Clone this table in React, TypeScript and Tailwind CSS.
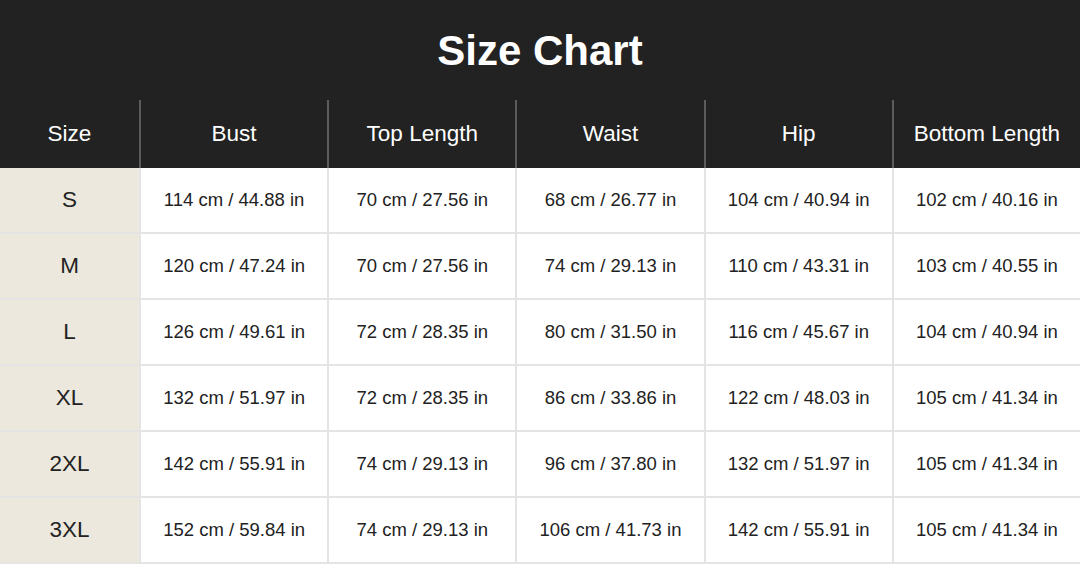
const HEADERS = ['Size', 'Bust', 'Top Length', 'Waist', 'Hip', 'Bottom Length']

const ROWS: string[][] = [
  ['S', '114 cm / 44.88 in', '70 cm / 27.56 in', '68 cm / 26.77 in', '104 cm / 40.94 in', '102 cm / 40.16 in'],
  ['M', '120 cm / 47.24 in', '70 cm / 27.56 in', '74 cm / 29.13 in', '110 cm / 43.31 in', '103 cm / 40.55 in'],
  ['L', '126 cm / 49.61 in', '72 cm / 28.35 in', '80 cm / 31.50 in', '116 cm / 45.67 in', '104 cm / 40.94 in'],
  ['XL', '132 cm / 51.97 in', '72 cm / 28.35 in', '86 cm / 33.86 in', '122 cm / 48.03 in', '105 cm / 41.34 in'],
  ['2XL', '142 cm / 55.91 in', '74 cm / 29.13 in', '96 cm / 37.80 in', '132 cm / 51.97 in', '105 cm / 41.34 in'],
  ['3XL', '152 cm / 59.84 in', '74 cm / 29.13 in', '106 cm / 41.73 in', '142 cm / 55.91 in', '105 cm / 41.34 in'],
]

const App = () => {
  return (
    <div className="w-[1080px] h-[564px] overflow-hidden bg-white font-['Liberation_Sans',Arial,sans-serif]">
      <div className="bg-[#222222]">
        <div className="h-[100px] flex items-center justify-center text-white text-[42px] font-bold">
          Size Chart
        </div>
        <div className="grid grid-cols-[139px_repeat(5,1fr)] h-[68px]">
          {HEADERS.map((h, i) => (
            <div
              key={h}
              className={`flex items-center justify-center text-white text-[22.5px] ${i > 0 ? 'border-l-2 border-[#5c5c5c]' : ''}`}
            >
              {h}
            </div>
          ))}
        </div>
      </div>
      <div>
        {ROWS.map((row) => (
          <div key={row[0]} className="grid grid-cols-[139px_repeat(5,1fr)] h-[66px] border-b-2 border-[#e4e4e4]">
            {row.map((cell, i) => (
              <div
                key={i}
                className={
                  i === 0
                    ? 'flex items-center justify-center bg-[#ece8de] text-[#222222] text-[22.5px]'
                    : 'flex items-center justify-center border-l-2 border-[#e4e4e4] text-[#222222] text-[18.5px]'
                }
              >
                {cell}
              </div>
            ))}
          </div>
        ))}
      </div>
    </div>
  )
}

export default App
